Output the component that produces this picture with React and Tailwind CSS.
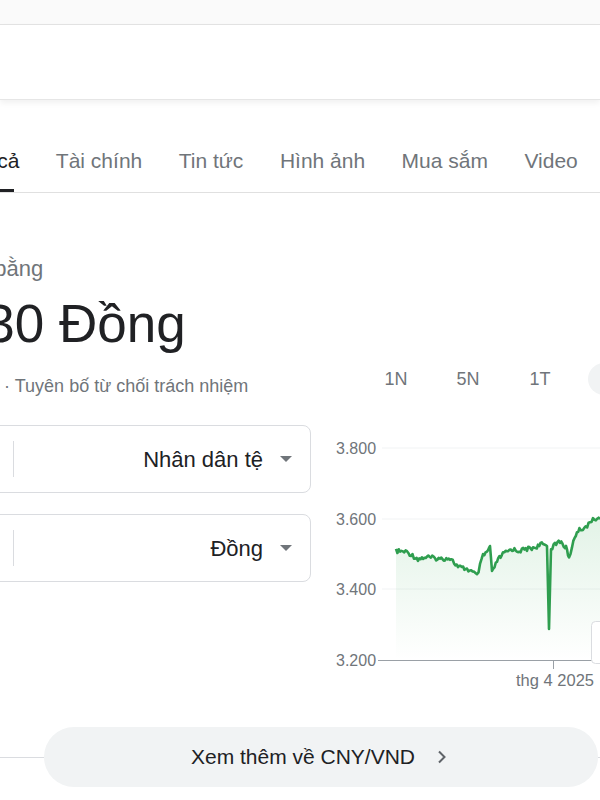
import React from 'react';

const font = { fontFamily: '"Liberation Sans", Arial, sans-serif' };

const keys = [
  [396, 550], [407, 551], [418, 558], [427, 556], [440, 558], [450, 557], [458, 566],
  [467, 568], [474, 572], [477, 575], [480, 565], [483, 555], [488, 550], [490, 545],
  [492, 572], [497, 560], [503, 553], [512, 548], [518, 550], [527, 548], [533, 547],
  [543, 543], [547, 545], [549, 628], [551, 547], [560, 540], [565, 546], [567, 548],
  [569, 558], [572, 545], [577, 530], [583, 527], [590, 523], [593, 517], [600, 518],
];

function buildLine() {
  const pts = [];
  let i = 0;
  for (let k = 0; k < keys.length - 1; k++) {
    const [x0, y0] = keys[k];
    const [x1, y1] = keys[k + 1];
    const steps = Math.max(1, Math.round((x1 - x0) / 1.3));
    for (let s = 0; s < steps; s++) {
      const t = s / steps;
      const r = Math.sin(i * 12.9898) * 43758.5453;
      const n = (r - Math.floor(r)) * 2 - 1;
      const sharp = y0 > 600 || y1 > 600;
      pts.push([x0 + (x1 - x0) * t - 330, y0 + (y1 - y0) * t - 420 + (sharp ? 0 : n * 2.2)]);
      i++;
    }
  }
  const last = keys[keys.length - 1];
  pts.push([last[0] - 330, last[1] - 420]);
  return pts;
}

const pts = buildLine();
const linePath = pts.map((p, i) => `${i ? 'L' : 'M'}${p[0].toFixed(1)} ${p[1].toFixed(1)}`).join(' ');
const fillPath = `${linePath} L${pts[pts.length - 1][0]} 239 L${pts[0][0]} 239 Z`;

function Chart() {
  const labels = [
    ['3.800', 27],
    ['3.600', 98],
    ['3.400', 168],
  ];
  return (
    <svg width="270" height="280" className="block" style={font}>
      <defs>
        <linearGradient id="g" x1="0" y1="0" x2="0" y2="1">
          <stop offset="0" stopColor="#34a853" stopOpacity="0.14" />
          <stop offset="1" stopColor="#34a853" stopOpacity="0" />
        </linearGradient>
      </defs>
      {labels.map(([t, y]) => (
        <g key={t}>
          <line x1="52" x2="270" y1={y} y2={y} stroke="#f1f3f4" strokeWidth="1" />
          <text x="6" y={y + 6} fontSize="16" fill="#70757a">{t}</text>
        </g>
      ))}
      <text x="6" y="245" fontSize="16" fill="#70757a">3.200</text>
      <path d={fillPath} fill="url(#g)" />
      <path d={linePath} fill="none" stroke="#2f9e4f" strokeWidth="2.6" strokeLinejoin="round" />
      <line x1="48" x2="270" y1="239.5" y2="239.5" stroke="#9aa0a6" strokeWidth="1" />
      <line x1="223.5" x2="223.5" y1="239" y2="248" stroke="#9aa0a6" strokeWidth="1" />
      <text x="225" y="265" fontSize="16.5" fill="#70757a" textAnchor="middle">thg 4 2025</text>
      <rect x="261.5" y="200.5" width="24" height="42" rx="4" fill="#fff" stroke="#dadce0" />
    </svg>
  );
}

function CurrencyBox({ value, label }) {
  return (
    <div className="ml-[-130px] w-[441px] h-[68px] border border-[#dadce0] rounded-lg flex items-center bg-white">
      <div className="w-[142px] h-full flex items-center pl-4 text-[22px] text-[#202124]">{value}</div>
      <div className="h-[36px] border-l border-[#dadce0]" />
      <div className="flex-1 flex items-center justify-end pr-[18px] gap-[17px]">
        <span className="text-[22px] text-[#202124]">{label}</span>
        <span className="w-0 h-0 border-l-[6px] border-r-[6px] border-t-[6px] border-l-transparent border-r-transparent border-t-[#70757a]" />
      </div>
    </div>
  );
}

export default function App() {
  const tabs = ['Tài chính', 'Tin tức', 'Hình ảnh', 'Mua sắm', 'Video', 'Sách'];
  return (
    <div className="w-[600px] h-[800px] overflow-hidden bg-white" style={font}>
      <div className="h-[25px] bg-[#fafafa] border-b border-[#e3e3e3]" />
      <div className="h-[75px] bg-white border-b border-[#e6e6e6] shadow-[0_3px_6px_rgba(0,0,0,0.06)]" />

      <div className="pt-[49px] border-b border-[#e0e0e0] flex gap-[36.5px] whitespace-nowrap text-[21px] leading-6 text-[#70757a]">
        <div className="ml-[-39px] flex flex-col">
          <span className="text-[#202124]">Tất cả</span>
          <div className="mt-[16px] h-[3px] bg-[#202124] mr-[5px]" />
        </div>
        {tabs.map((t) => (
          <div key={t} className="flex flex-col">
            <span>{t}</span>
            <div className="mt-[16px] h-[3px]" />
          </div>
        ))}
      </div>

      <div className="flex h-[506px]">
        <div className="w-[311px] shrink-0 pt-[62px] whitespace-nowrap">
          <div className="ml-[-150px] text-[22px] leading-7 text-[#70757a]">1 Nhân dân tệ bằng</div>
          <div className="ml-[-162px] mt-[11px] text-[53px] leading-[60px] text-[#202124]">3.591,30 Đồng</div>
          <div className="ml-[-163px] mt-[20px] text-[18px] leading-6 text-[#70757a]">13 thg 5, 10:45 UTC · Tuyên bố từ chối trách nhiệm</div>
          <div className="mt-[27px]">
            <CurrencyBox value="1" label="Nhân dân tệ" />
          </div>
          <div className="mt-[21px]">
            <CurrencyBox value="3.591,30" label="Đồng" />
          </div>
        </div>
        <div className="ml-[19px] pt-[170px] whitespace-nowrap">
          <div className="ml-[42px] flex gap-6 text-[18px] text-[#70757a]">
            {['1N', '5N', '1T', '5T'].map((r, i) => (
              <div
                key={r}
                className={`w-12 h-8 rounded-full flex items-center justify-center ${i === 3 ? 'bg-[#f1f3f4]' : ''}`}
              >
                {i === 3 ? '' : r}
              </div>
            ))}
          </div>
          <div className="mt-[26px]">
            <Chart />
          </div>
        </div>
      </div>

      <div className="mt-[28px] flex items-center">
        <div className="w-[44px] border-t border-[#dadce0]" />
        <button className="w-[554px] h-[60px] shrink-0 rounded-full bg-[#f1f3f4] flex items-center justify-center gap-[22px] pr-[4px] text-[21px] text-[#202124]">
          <span>Xem thêm về CNY/VND</span>
          <svg width="10" height="14" viewBox="0 0 10 14">
            <path d="M2 1.5 L7.5 7 L2 12.5" fill="none" stroke="#5f6368" strokeWidth="2" />
          </svg>
        </button>
        <div className="flex-1 border-t border-[#dadce0]" />
      </div>
    </div>
  );
}
